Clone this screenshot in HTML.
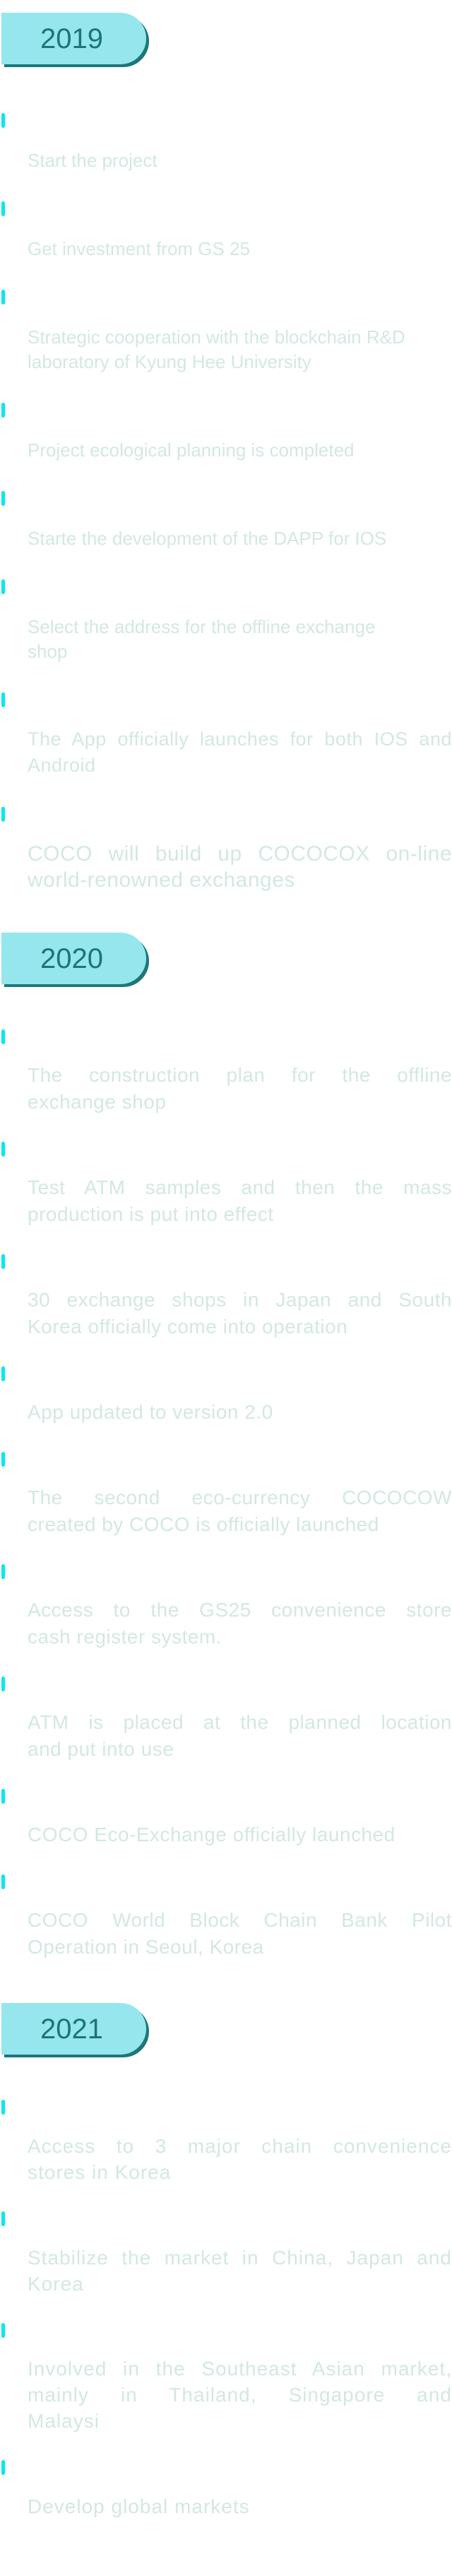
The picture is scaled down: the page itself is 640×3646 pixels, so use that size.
<!DOCTYPE html>
<html><head><meta charset="utf-8">
<style>
html,body{margin:0;padding:0;background:#fff;}
body{width:640px;height:3646px;overflow:hidden;font-family:"Liberation Sans",Arial,sans-serif;color:#d3e8e2;}
.badge{margin-left:2px;width:205px;height:73px;background:#96e6ee;border-radius:0 38px 38px 0;box-shadow:4px 4px 0 #1b7878;position:relative;}
.badge span{position:absolute;left:55px;top:14px;font-size:40px;line-height:46px;color:#1b7676;}
.mk{display:block;margin-left:2px;width:5px;height:21px;border-radius:3px;background:#00e8f0;}
p{margin:0;width:601px;margin-left:39px;}
.j{display:block;text-align:justify;text-align-last:justify;}
.l{display:block;}
/* 2019 small */
.s .it p{font-size:26px;line-height:35px;margin-top:28.5px;}
.s .it+.it{margin-top:40.5px;}
.s .it.b p{font-size:28px;line-height:37px;margin-top:26.8px;letter-spacing:0.5px;}
/* 2020 */
.t .it p{font-size:28px;line-height:38px;margin-top:25.3px;letter-spacing:0.5px;}
.t .it+.it{margin-top:36.7px;}
/* 2021 */
.u .it p{font-size:28px;line-height:37px;margin-top:25.8px;letter-spacing:1px;}
.u .it+.it{margin-top:37px;}
</style></head><body>
<div style="height:18px"></div>
<div class="badge"><span>2019</span></div>
<div class="s" style="margin-top:69px">
 <div class="it"><i class="mk"></i><p>Start the project</p></div>
 <div class="it"><i class="mk"></i><p>Get investment from GS 25</p></div>
 <div class="it"><i class="mk"></i><p><span class="l">Strategic cooperation with the blockchain R&amp;D</span><span class="l">laboratory of Kyung Hee University</span></p></div>
 <div class="it"><i class="mk"></i><p>Project ecological planning is completed</p></div>
 <div class="it"><i class="mk"></i><p>Starte the development of the DAPP for IOS</p></div>
 <div class="it"><i class="mk"></i><p><span class="l">Select the address for the offline exchange</span><span class="l">shop</span></p></div>
 <div class="it b"><i class="mk"></i><p style="font-size:27px"><span class="j">The App officially launches for both IOS and</span><span class="l">Android</span></p></div>
 <div class="it b"><i class="mk"></i><p style="font-size:30px"><span class="j">COCO will build up COCOCOX on-line</span><span class="l">world-renowned exchanges</span></p></div>
</div>
<div class="badge" style="margin-top:56px"><span>2020</span></div>
<div class="t" style="margin-top:64px">
 <div class="it"><i class="mk"></i><p><span class="j">The construction plan for the offline</span><span class="l">exchange shop</span></p></div>
 <div class="it"><i class="mk"></i><p><span class="j">Test ATM samples and then the mass</span><span class="l">production is put into effect</span></p></div>
 <div class="it"><i class="mk"></i><p><span class="j">30 exchange shops in Japan and South</span><span class="l">Korea officially come into operation</span></p></div>
 <div class="it"><i class="mk"></i><p>App updated to version 2.0</p></div>
 <div class="it"><i class="mk"></i><p><span class="j">The second eco-currency COCOCOW</span><span class="l">created by COCO is officially launched</span></p></div>
 <div class="it"><i class="mk"></i><p><span class="j">Access to the GS25 convenience store</span><span class="l">cash register system.</span></p></div>
 <div class="it"><i class="mk"></i><p><span class="j">ATM is placed at the planned location</span><span class="l">and put into use</span></p></div>
 <div class="it"><i class="mk"></i><p>COCO Eco-Exchange officially launched</p></div>
 <div class="it"><i class="mk"></i><p><span class="j">COCO World Block Chain Bank Pilot</span><span class="l">Operation in Seoul, Korea</span></p></div>
</div>
<div class="badge" style="margin-top:59.7px"><span>2021</span></div>
<div class="u" style="margin-top:64px">
 <div class="it"><i class="mk"></i><p><span class="j">Access to 3 major chain convenience</span><span class="l">stores in Korea</span></p></div>
 <div class="it"><i class="mk"></i><p><span class="j">Stabilize the market in China, Japan and</span><span class="l">Korea</span></p></div>
 <div class="it"><i class="mk"></i><p><span class="j">Involved in the Southeast Asian market,</span><span class="j">mainly in Thailand, Singapore and</span><span class="l">Malaysi</span></p></div>
 <div class="it"><i class="mk"></i><p>Develop global markets</p></div>
</div>
</body></html>
